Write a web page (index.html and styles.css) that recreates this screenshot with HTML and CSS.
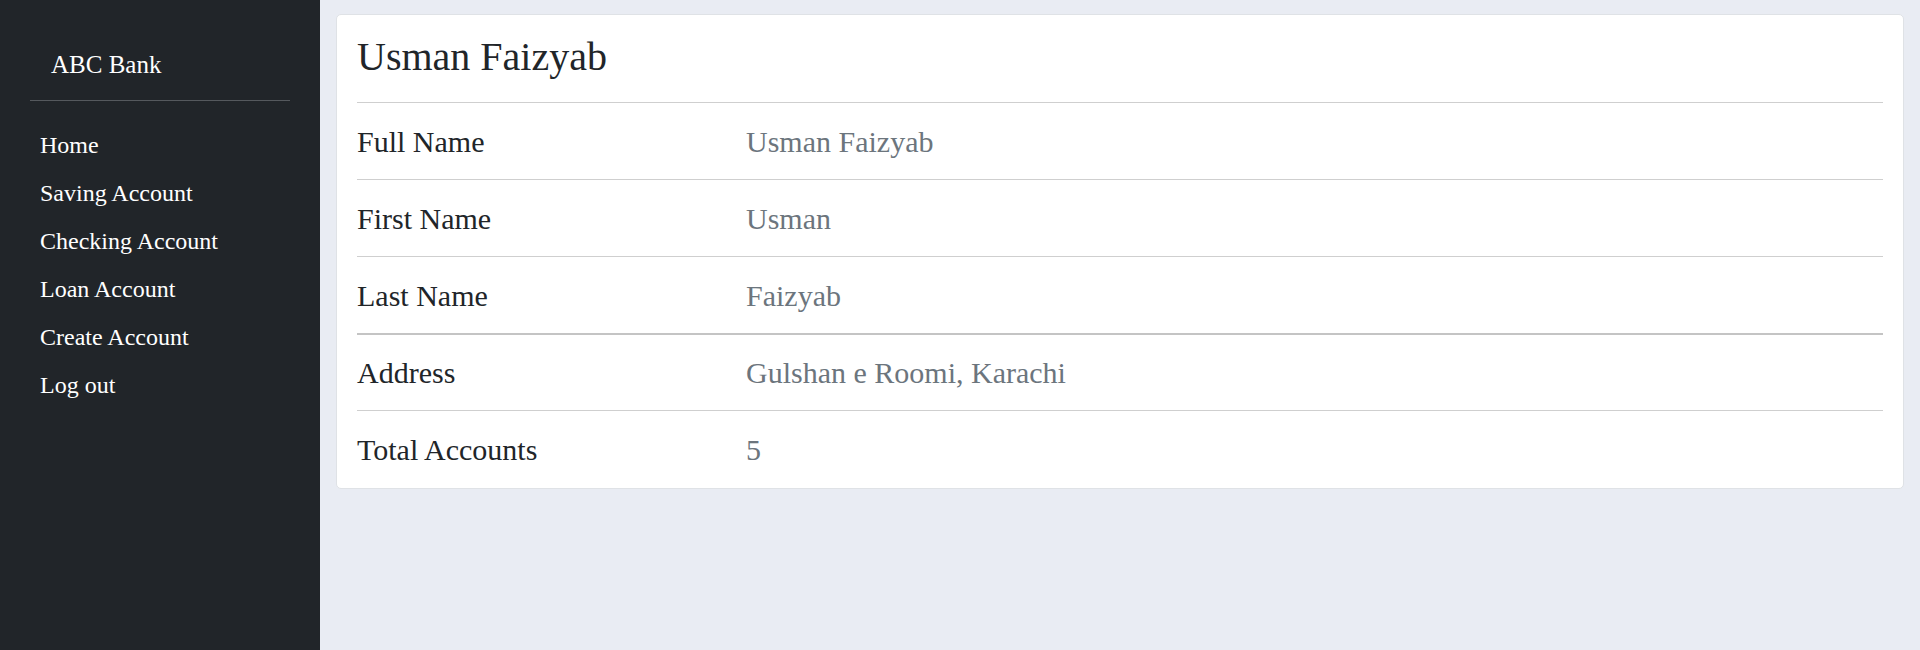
FILE: index.html
```html
<!DOCTYPE html>
<html lang="en">
<head>
<meta charset="utf-8">
<title>ABC Bank - Profile</title>
<link rel="stylesheet" href="styles.css">
</head>
<body>
<div class="layout">
  <aside class="sidebar">
    <div class="brand">ABC Bank</div>
    <hr class="sidebar-divider">
    <nav class="nav">
      <a class="nav-link" href="#">Home</a>
      <a class="nav-link" href="#">Saving Account</a>
      <a class="nav-link" href="#">Checking Account</a>
      <a class="nav-link" href="#">Loan Account</a>
      <a class="nav-link" href="#">Create Account</a>
      <a class="nav-link" href="#">Log out</a>
    </nav>
  </aside>
  <main class="main">
    <section class="card">
      <h2 class="card-title">Usman Faizyab</h2>
      <div class="info-row">
        <div class="info-label">Full Name</div>
        <div class="info-value">Usman Faizyab</div>
      </div>
      <div class="info-row">
        <div class="info-label">First Name</div>
        <div class="info-value">Usman</div>
      </div>
      <div class="info-row">
        <div class="info-label">Last Name</div>
        <div class="info-value">Faizyab</div>
      </div>
      <div class="info-row info-row-strong">
        <div class="info-label">Address</div>
        <div class="info-value">Gulshan e Roomi, Karachi</div>
      </div>
      <div class="info-row">
        <div class="info-label">Total Accounts</div>
        <div class="info-value">5</div>
      </div>
    </section>
  </main>
</div>
</body>
</html>
```
FILE: styles.css
```css
* {
  box-sizing: border-box;
}

html, body {
  margin: 0;
  padding: 0;
  height: 100%;
}

body {
  font-family: "Liberation Serif", "Times New Roman", serif;
  color: #212529;
  background: #e9ecf3;
}

.layout {
  display: flex;
  min-height: 650px;
}

.sidebar {
  width: 320px;
  flex: 0 0 320px;
  background: #212529;
  padding: 50px 30px;
  color: #ffffff;
}

.brand {
  font-size: 25px;
  line-height: 30px;
  padding-left: 21px;
  color: #ffffff;
}

.sidebar-divider {
  border: 0;
  border-top: 1px solid #55595d;
  margin: 20px 0 20px;
  height: 0;
}

.nav {
  display: flex;
  flex-direction: column;
}

.nav-link {
  display: block;
  font-size: 24px;
  line-height: 36px;
  padding: 6px 10px;
  color: #ffffff;
  text-decoration: none;
}

.main {
  flex: 1;
  padding: 14px 16px;
}

.card {
  background: #ffffff;
  border: 1px solid #dfe2e6;
  border-radius: 5px;
  padding: 20px 20px 1px;
}

.card-title {
  margin: 0 0 23px;
  font-size: 40px;
  line-height: 44px;
  font-weight: normal;
  color: #212529;
}

.info-row {
  display: grid;
  grid-template-columns: 389px 1fr;
  border-top: 1px solid #cfcfcf;
  padding: 16px 0 15px;
  font-size: 30px;
  line-height: 45px;
}

.info-row-strong {
  border-top: 2px solid #c4c4c4;
  padding-top: 15px;
}

.info-label {
  color: #212529;
}

.info-value {
  color: #6c757d;
}
```
